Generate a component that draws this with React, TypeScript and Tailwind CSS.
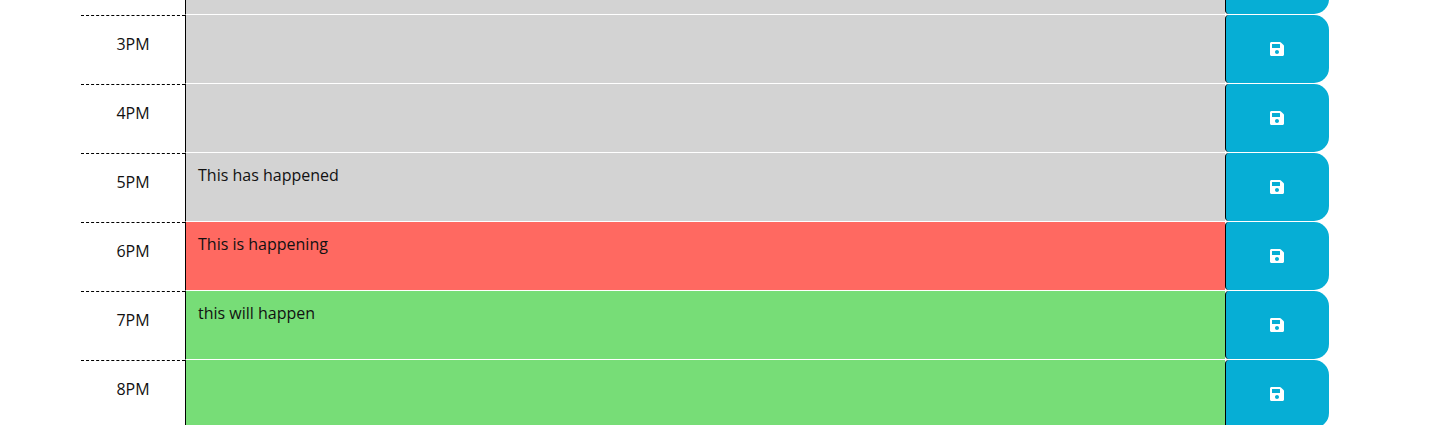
import React from 'react';
import { FaSave } from 'react-icons/fa';

interface Hour {
  id: string;
  label: string;
  note: string;
  tone: string;
}

// The 2PM row is scrolled almost out of the picture, only its bottom edge shows
const hours: Hour[] = [
  { id: '2', label: '', note: '', tone: 'bg-[#d3d3d3]' },
  { id: '3', label: '3PM', note: '', tone: 'bg-[#d3d3d3]' },
  { id: '4', label: '4PM', note: '', tone: 'bg-[#d3d3d3]' },
  { id: '5', label: '5PM', note: 'This has happened', tone: 'bg-[#d3d3d3]' },
  { id: '6', label: '6PM', note: 'This is happening', tone: 'bg-[#ff6961]' },
  { id: '7', label: '7PM', note: 'this will happen', tone: 'bg-[#77dd77]' },
  { id: '8', label: '8PM', note: '', tone: 'bg-[#77dd77]' },
];

function HourRow({ label, note, tone }: Hour) {
  return (
    <div className="flex h-[69px]">
      {/* Hour label */}
      <div className="flex w-[104px] items-center justify-center border-t border-dashed border-black pb-[13px]">
        {label}
      </div>

      {/* Note */}
      <div className={`w-[1040px] border-b border-l border-b-white border-l-black px-3 pt-2.5 ${tone}`}>
        {note}
      </div>

      {/* Save */}
      <button className="flex h-[68px] w-[104px] items-center justify-center rounded-l-[4px] rounded-r-[15px] border-l border-black bg-[#06aed5] pr-0.5 text-white">
        <FaSave size={16} />
      </button>
    </div>
  );
}

export default function App() {
  return (
    <div className="h-[425px] overflow-hidden bg-white font-['Open_Sans',sans-serif] text-base leading-6 text-[#111]">
      <div className="-mt-[54px] ml-[81px] w-[1248px]">
        {hours.map((hour) => (
          <HourRow key={hour.id} {...hour} />
        ))}
      </div>
    </div>
  );
}
